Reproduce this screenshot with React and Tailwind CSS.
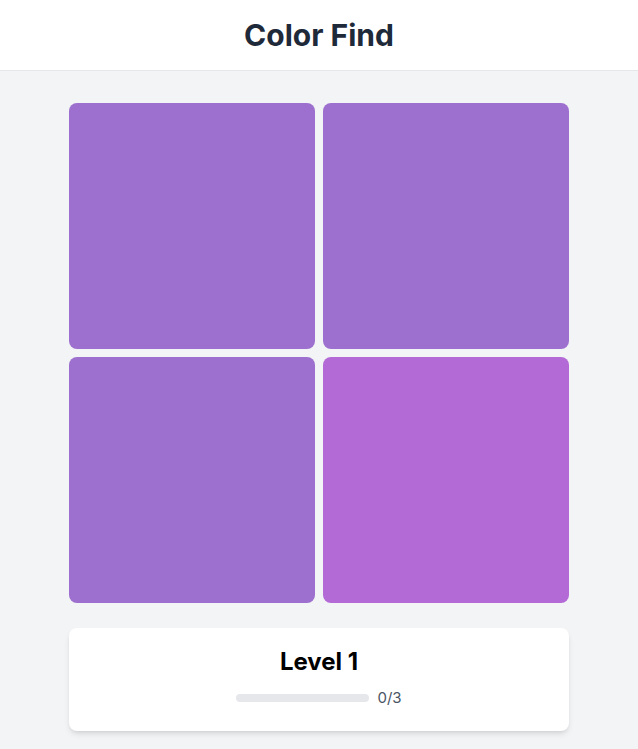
import React, { useState } from 'react';

const BASE = '#9d70cf';
const ODD = '#b36ad6';

const App = () => {
  const [oddIndex] = useState(3);
  const [score] = useState(0);
  const total = 3;

  return (
    <div
      className="min-h-screen bg-gray-100"
      style={{ fontFamily: 'Inter, "Noto Sans", sans-serif' }}
    >
      {/* Header */}
      <header className="h-[71px] bg-white border-b border-gray-200 flex items-center justify-center">
        <h1 className="text-[30px] font-bold text-gray-800 tracking-normal">Color Find</h1>
      </header>

      <main className="max-w-[500px] mx-auto pt-8">
        {/* Tiles */}
        <div className="grid grid-cols-2 gap-2">
          {[0, 1, 2, 3].map((i) => (
            <button
              key={i}
              className="aspect-square rounded-lg"
              style={{ backgroundColor: i === oddIndex ? ODD : BASE }}
            />
          ))}
        </div>

        {/* Level card */}
        <div className="mt-[25px] bg-white rounded-lg shadow-md h-[103px] flex flex-col items-center pt-[18px]">
          <h2 className="text-[24px] font-bold text-black leading-8">Level 1</h2>
          <div className="mt-[9px] flex items-center gap-2">
            <div className="w-[133px] h-2 rounded-full bg-gray-200 overflow-hidden">
              <div className="h-full bg-purple-500" style={{ width: `${(score / total) * 100}%` }} />
            </div>
            <span className="text-[15px] text-gray-600">
              {score}/{total}
            </span>
          </div>
        </div>
      </main>
    </div>
  );
};

export default App;
